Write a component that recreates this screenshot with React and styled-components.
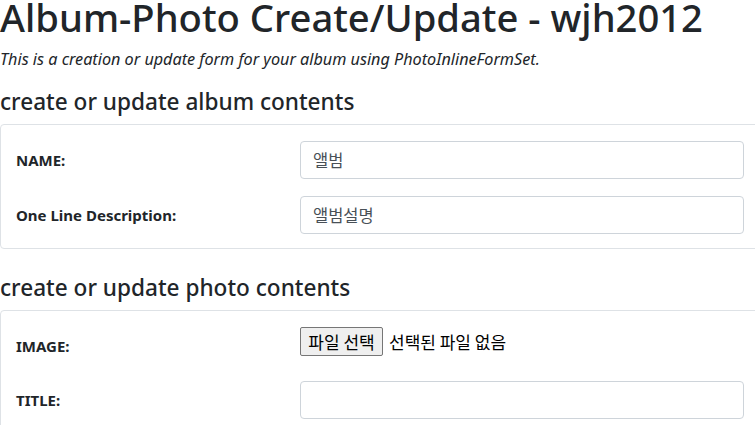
import React from "react";
import styled, { createGlobalStyle } from "styled-components";

const GlobalStyle = createGlobalStyle`
  html, body {
    margin: 0;
    padding: 0;
    background: #ffffff;
    overflow: hidden;
  }
  body {
    font-family: "Noto Sans", "Noto Sans CJK KR", sans-serif;
    color: #212529;
    font-size: 16px;
  }
  * { box-sizing: border-box; }
`;

const Page = styled.div`
  width: 760px;
`;

const Title = styled.h1`
  margin: 0;
  font-size: 38.2px;
  font-weight: 500;
  line-height: 35px;
  white-space: nowrap;
`;

const Lead = styled.p`
  margin: 12px 0 0;
  font-size: 16.2px;
  font-style: italic;
  line-height: 24px;
  white-space: nowrap;
`;

const SectionTitle = styled.h4`
  margin: ${(p) => p.$mt}px 0 8px;
  font-size: 22.6px;
  font-weight: 500;
  line-height: 28px;
  white-space: nowrap;
`;

const Card = styled.section`
  border: 1px solid #dee2e6;
  border-radius: 4px;
  padding: 16px 15px 14px;
  display: flex;
  flex-direction: column;
  gap: ${(p) => p.$gap}px;
`;

const Row = styled.div`
  display: grid;
  grid-template-columns: 284px 444px;
  align-items: ${(p) => (p.$top ? "start" : "center")};
  height: 38px;
`;

const Label = styled.label`
  font-size: 15px;
  font-weight: 700;
  align-self: center;
  white-space: nowrap;
`;

const Input = styled.input`
  height: 38px;
  width: 444px;
  border: 1px solid #ced4da;
  border-radius: 4px;
  padding: 0 12px;
  font-family: "Noto Sans CJK KR", "Noto Sans", sans-serif;
  font-size: 16.5px;
  color: #495057;
  background: #fff;
  outline: none;
`;

const FileWrap = styled.div`
  display: flex;
  align-items: center;
  gap: 6px;
  height: 29px;
  font-family: "Noto Sans CJK KR", sans-serif;
  font-size: 17px;
  color: #000;
  white-space: nowrap;
`;

const FileButton = styled.button`
  height: 29px;
  width: 83px;
  padding: 0;
  border: 1px solid #767676;
  border-radius: 2px;
  background: #efefef;
  font-family: "Noto Sans CJK KR", sans-serif;
  font-size: 17px;
  color: #000;
`;

export default function App() {
  return (
    <>
      <GlobalStyle />
      <Page>
        <Title>Album-Photo Create/Update - wjh2012</Title>
        <Lead>This is a creation or update form for your album using PhotoInlineFormSet.</Lead>
        <SectionTitle $mt={17}>create or update album contents</SectionTitle>
        <Card $gap={17}>
          <Row>
            <Label>NAME:</Label>
            <Input defaultValue="앨범" />
          </Row>
          <Row>
            <Label>One Line Description:</Label>
            <Input defaultValue="앨범설명" />
          </Row>
        </Card>
        <SectionTitle $mt={25}>create or update photo contents</SectionTitle>
        <Card $gap={16}>
          <Row $top>
            <Label>IMAGE:</Label>
            <FileWrap>
              <FileButton type="button">파일 선택</FileButton>
              <span>선택된 파일 없음</span>
            </FileWrap>
          </Row>
          <Row>
            <Label>TITLE:</Label>
            <Input defaultValue="" />
          </Row>
        </Card>
      </Page>
    </>
  );
}
